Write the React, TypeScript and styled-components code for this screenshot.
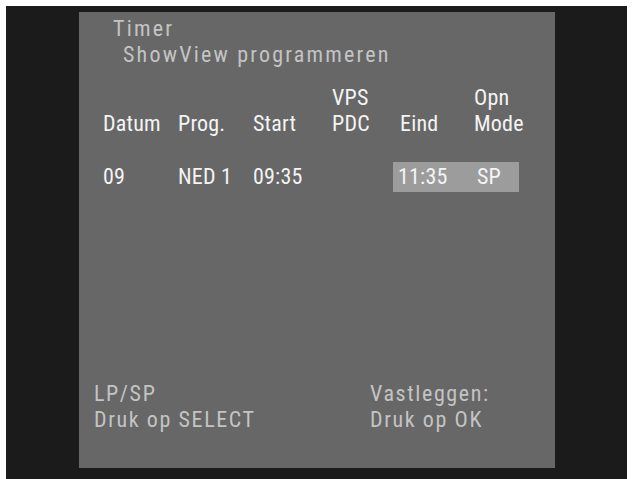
import React from "react";
import styled, { createGlobalStyle } from "styled-components";

const GlobalStyle = createGlobalStyle`
    html, body {
        margin: 0;
        background: #ffffff;
    }
    body {
        font-family: "Roboto Condensed", "DejaVu Sans Condensed", sans-serif;
    }
`

const Screen = styled.div`
    margin: 6px 0 0 6px;
    width: 621px;
    height: 473px;
    background: #1b1b1b;
    padding: 6px 0 0 73px;
    box-sizing: border-box;
`

const Panel = styled.div`
    width: 476px;
    height: 456px;
    background: #676767;
    box-sizing: border-box;
    padding: 4px 0 35px 0;
    display: flex;
    flex-direction: column;
    font-size: 22px;
    line-height: 26px;
    white-space: nowrap;
`

const Header = styled.div`
    color: #c4c4c4;
    letter-spacing: 2.2px;
`

const TitleLine = styled.div<{ $indent: number }>`
    padding-left: ${p => p.$indent}px;
`

const Table = styled.div`
    margin-top: 17px;
    padding-left: 24px;
    display: grid;
    grid-template-columns: 75px 75px 79px 61px 81px 45px;
    color: #f4f4f4;
    letter-spacing: 0.2px;
`

const HeadCell = styled.div<{ $pad?: number }>`
    display: flex;
    flex-direction: column;
    justify-content: flex-end;
    height: 52px;
    padding-left: ${p => p.$pad ?? 0}px;
    margin-bottom: 25px;
`

const DataCell = styled.div`
    line-height: 30px;
`

const Highlight = styled.div`
    grid-column: 5 / span 2;
    display: grid;
    grid-template-columns: 81px 45px;
    background: #9c9c9c;
    line-height: 30px;
`

const HighlightCell = styled.div<{ $pad: number }>`
    padding-left: ${p => p.$pad}px;
`

const Footer = styled.div`
    margin-top: auto;
    padding-left: 15px;
    display: grid;
    grid-template-columns: 276px auto;
    color: #c4c4c4;
    letter-spacing: 1.6px;
`

const App = () => {
    return (
        <>
            <GlobalStyle />
            <Screen>
                <Panel>
                    <Header>
                        <TitleLine $indent={34}>Timer</TitleLine>
                        <TitleLine $indent={44}>ShowView programmeren</TitleLine>
                    </Header>
                    <Table>
                        <HeadCell>Datum</HeadCell>
                        <HeadCell>Prog.</HeadCell>
                        <HeadCell>Start</HeadCell>
                        <HeadCell><span>VPS</span><span>PDC</span></HeadCell>
                        <HeadCell $pad={7}>Eind</HeadCell>
                        <HeadCell><span>Opn</span><span>Mode</span></HeadCell>

                        <DataCell>09</DataCell>
                        <DataCell>NED 1</DataCell>
                        <DataCell>09:35</DataCell>
                        <DataCell />
                        <Highlight>
                            <HighlightCell $pad={5}>11:35</HighlightCell>
                            <HighlightCell $pad={3}>SP</HighlightCell>
                        </Highlight>
                    </Table>
                    <Footer>
                        <div>
                            <div>LP/SP</div>
                            <div>Druk op SELECT</div>
                        </div>
                        <div>
                            <div>Vastleggen:</div>
                            <div>Druk op OK</div>
                        </div>
                    </Footer>
                </Panel>
            </Screen>
        </>
    )
}

export default App
